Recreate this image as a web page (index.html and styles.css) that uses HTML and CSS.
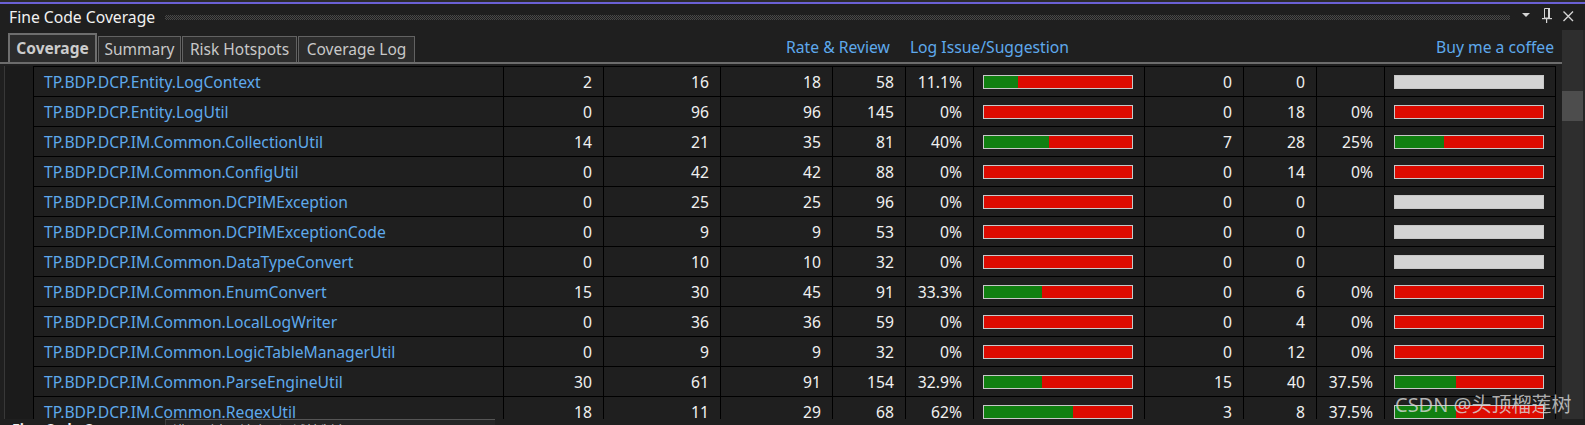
FILE: index.html
```html
<!DOCTYPE html>
<html>
<head>
<meta charset="utf-8">
<title>Fine Code Coverage</title>
<link rel="stylesheet" href="styles.css">
</head>
<body>
<div class="window">
  <div class="topedge"></div>
  <div class="titlebar">
    <span class="title">Fine Code Coverage</span>
    <div class="grip"></div>
    <div class="tbicons">
      <svg class="ic ic-drop" width="16" height="16" viewBox="0 0 16 16"><path d="M4 4h8l-4 4z" fill="#d4d4d4"/></svg>
      <svg class="ic ic-pin" width="16" height="16" viewBox="0 0 16 16"><path d="M5.5 1.5h4.5v9.5h-4.5z" fill="none" stroke="#d4d4d4"/><rect x="9" y="1" width="2" height="11" fill="#d4d4d4"/><rect x="3" y="11" width="10" height="1.2" fill="#d4d4d4"/><rect x="7" y="12" width="1.2" height="4" fill="#d4d4d4"/></svg>
      <svg class="ic ic-close" width="16" height="16" viewBox="0 0 16 16"><path d="M3.5 4.5L13 14M13 4.5L3.5 14" stroke="#d4d4d4" stroke-width="1.4" fill="none"/></svg>
    </div>
  </div>
  <div class="body">
    <div class="main">
      <div class="tabhead">
        <div class="tabs">
          <div class="tab sel">Coverage</div>
          <div class="tab t-sum">Summary</div>
          <div class="tab t-risk">Risk Hotspots</div>
          <div class="tab t-log">Coverage Log</div>
        </div>
        <a class="link l-rate">Rate &amp; Review</a>
        <a class="link l-issue">Log Issue/Suggestion</a>
        <a class="link l-buy">Buy me a coffee</a>
      </div>
      <div class="tabline"></div>
      <div class="gridwrap">
        <div class="gutter"></div>
        <div class="rows">
          <div class="row">
            <div class="c name">TP.BDP.DCP.Entity.LogContext</div>
            <div class="c">2</div><div class="c">16</div><div class="c">18</div><div class="c">58</div><div class="c">11.1%</div>
            <div class="c cb"><div class="bar"><div class="g" style="width:23%"></div></div></div>
            <div class="c">0</div><div class="c">0</div><div class="c"></div>
            <div class="c cb"><div class="bar empty"></div></div>
          </div>
          <div class="row">
            <div class="c name">TP.BDP.DCP.Entity.LogUtil</div>
            <div class="c">0</div><div class="c">96</div><div class="c">96</div><div class="c">145</div><div class="c">0%</div>
            <div class="c cb"><div class="bar"></div></div>
            <div class="c">0</div><div class="c">18</div><div class="c">0%</div>
            <div class="c cb"><div class="bar"></div></div>
          </div>
          <div class="row">
            <div class="c name">TP.BDP.DCP.IM.Common.CollectionUtil</div>
            <div class="c">14</div><div class="c">21</div><div class="c">35</div><div class="c">81</div><div class="c">40%</div>
            <div class="c cb"><div class="bar"><div class="g" style="width:44%"></div></div></div>
            <div class="c">7</div><div class="c">28</div><div class="c">25%</div>
            <div class="c cb"><div class="bar"><div class="g" style="width:33%"></div></div></div>
          </div>
          <div class="row">
            <div class="c name">TP.BDP.DCP.IM.Common.ConfigUtil</div>
            <div class="c">0</div><div class="c">42</div><div class="c">42</div><div class="c">88</div><div class="c">0%</div>
            <div class="c cb"><div class="bar"></div></div>
            <div class="c">0</div><div class="c">14</div><div class="c">0%</div>
            <div class="c cb"><div class="bar"></div></div>
          </div>
          <div class="row">
            <div class="c name">TP.BDP.DCP.IM.Common.DCPIMException</div>
            <div class="c">0</div><div class="c">25</div><div class="c">25</div><div class="c">96</div><div class="c">0%</div>
            <div class="c cb"><div class="bar"></div></div>
            <div class="c">0</div><div class="c">0</div><div class="c"></div>
            <div class="c cb"><div class="bar empty"></div></div>
          </div>
          <div class="row">
            <div class="c name">TP.BDP.DCP.IM.Common.DCPIMExceptionCode</div>
            <div class="c">0</div><div class="c">9</div><div class="c">9</div><div class="c">53</div><div class="c">0%</div>
            <div class="c cb"><div class="bar"></div></div>
            <div class="c">0</div><div class="c">0</div><div class="c"></div>
            <div class="c cb"><div class="bar empty"></div></div>
          </div>
          <div class="row">
            <div class="c name">TP.BDP.DCP.IM.Common.DataTypeConvert</div>
            <div class="c">0</div><div class="c">10</div><div class="c">10</div><div class="c">32</div><div class="c">0%</div>
            <div class="c cb"><div class="bar"></div></div>
            <div class="c">0</div><div class="c">0</div><div class="c"></div>
            <div class="c cb"><div class="bar empty"></div></div>
          </div>
          <div class="row">
            <div class="c name">TP.BDP.DCP.IM.Common.EnumConvert</div>
            <div class="c">15</div><div class="c">30</div><div class="c">45</div><div class="c">91</div><div class="c">33.3%</div>
            <div class="c cb"><div class="bar"><div class="g" style="width:39%"></div></div></div>
            <div class="c">0</div><div class="c">6</div><div class="c">0%</div>
            <div class="c cb"><div class="bar"></div></div>
          </div>
          <div class="row">
            <div class="c name">TP.BDP.DCP.IM.Common.LocalLogWriter</div>
            <div class="c">0</div><div class="c">36</div><div class="c">36</div><div class="c">59</div><div class="c">0%</div>
            <div class="c cb"><div class="bar"></div></div>
            <div class="c">0</div><div class="c">4</div><div class="c">0%</div>
            <div class="c cb"><div class="bar"></div></div>
          </div>
          <div class="row">
            <div class="c name">TP.BDP.DCP.IM.Common.LogicTableManagerUtil</div>
            <div class="c">0</div><div class="c">9</div><div class="c">9</div><div class="c">32</div><div class="c">0%</div>
            <div class="c cb"><div class="bar"></div></div>
            <div class="c">0</div><div class="c">12</div><div class="c">0%</div>
            <div class="c cb"><div class="bar"></div></div>
          </div>
          <div class="row">
            <div class="c name">TP.BDP.DCP.IM.Common.ParseEngineUtil</div>
            <div class="c">30</div><div class="c">61</div><div class="c">91</div><div class="c">154</div><div class="c">32.9%</div>
            <div class="c cb"><div class="bar"><div class="g" style="width:39%"></div></div></div>
            <div class="c">15</div><div class="c">40</div><div class="c">37.5%</div>
            <div class="c cb"><div class="bar"><div class="g" style="width:41%"></div></div></div>
          </div>
          <div class="row">
            <div class="c name">TP.BDP.DCP.IM.Common.RegexUtil</div>
            <div class="c">18</div><div class="c">11</div><div class="c">29</div><div class="c">68</div><div class="c">62%</div>
            <div class="c cb"><div class="bar"><div class="g" style="width:60%"></div></div></div>
            <div class="c">3</div><div class="c">8</div><div class="c">37.5%</div>
            <div class="c cb"><div class="bar"><div class="g" style="width:41%"></div></div></div>
          </div>
        </div>
      </div>
    </div>
    <div class="vscroll"><div class="thumb"></div></div>
    <div class="edge"></div>
  </div>
  <div class="status">
    <span class="st-title">Fine Code Coverage</span>
    <span class="st-box">错误列表 - 输出 - 调试控制台</span>
  </div>
  <div class="watermark">CSDN @头顶榴莲树</div>
</div>
</body>
</html>
```

FILE: styles.css
```css
* { box-sizing: border-box; }
html, body { margin: 0; padding: 0; }
body {
  background: #1f1f1f;
  font-family: "Noto Sans", "Open Sans", sans-serif;
  color: #f0f0f0;
  width: 1585px;
  height: 425px;
  overflow: hidden;
}
.window {
  position: relative;
  width: 1585px;
  height: 425px;
  overflow: hidden;
  background: #1f1f1f;
}
.topedge { height: 2px; background: #2b2b2b; }
.titlebar {
  height: 28px;
  border-top: 2px solid #6a60d4;
  display: flex;
  align-items: center;
  padding-left: 9px;
}
.title { font-size: 15.7px; color: #f1f1f1; line-height: 24px; }
.grip {
  flex: 1;
  height: 5px;
  margin: 0 8px 0 10px;
  background: repeating-conic-gradient(#4a4a4a 0 25%, transparent 0 50%) 0 0 / 2px 2px;
}
.tbicons {
  display: flex;
  align-items: flex-start;
  gap: 5px;
  height: 26px;
  padding-right: 9px;
}
.ic { display: block; }
.ic-drop { margin-top: 5px; }
.ic-pin { margin-top: 3px; }
.ic-close { margin-top: 3px; }

.body { display: flex; height: 389px; }
.main { width: 1562px; display: flex; flex-direction: column; }
.vscroll { width: 21px; background: #2e2e2e; padding-top: 61px; }
.thumb { height: 30px; background: #4d4d4d; }
.edge { width: 2px; background: #262626; }

.tabhead {
  height: 32px;
  display: flex;
  align-items: flex-end;
  padding-left: 8px;
  padding-right: 8px;
}
.tabs { display: flex; align-items: flex-end; gap: 1px; }
.tab {
  height: 26px;
  border: 1px solid #626262;
  border-bottom: none;
  background: #2c2c2c;
  color: #c8c8c8;
  font-size: 15.5px;
  line-height: 24px;
  text-align: center;
  white-space: nowrap;
}
.tab.sel {
  width: 89px;
  height: 29px;
  border: 2px solid #6e6e6e;
  border-bottom: none;
  font-weight: bold;
  line-height: 27px;
  color: #cccccc;
}
.t-sum { width: 83px; }
.t-risk { width: 115px; }
.t-log { width: 117px; }
.link {
  align-self: center;
  font-size: 15.7px;
  color: #5ea9ec;
  padding-top: 2px;
  white-space: nowrap;
}
.l-rate { margin-left: 371px; }
.l-issue { margin-left: 20px; }
.l-buy { margin-left: auto; }
.tabline { height: 2px; background: #6c6c6c; }

.gridwrap {
  margin-top: 2px;
  flex: 1;
  display: flex;
  overflow: hidden;
}
.gutter {
  width: 34px;
  border-right: 1px solid #000;
  background: linear-gradient(to right, #1f1f1f 0 4px, #383838 4px 5px, #1b1b1b 5px);
}
.rows { display: flex; flex-direction: column; }
.row {
  display: grid;
  grid-template-columns: 470px 100px 117px 112px 73px 68px 171px 99px 73px 68px 171px;
  height: 30px;
  flex: none;
  border-top: 1px solid #000;
  background: #1f1f1f;
}
.c {
  border-right: 1px solid #000;
  display: flex;
  align-items: center;
  justify-content: flex-end;
  padding-right: 11px;
  font-size: 15.7px;
  color: #f0f0f0;
  white-space: nowrap;
}
.c.name {
  justify-content: flex-start;
  padding-left: 10px;
  color: #5ea9ec;
}
.c.cb {
  justify-content: flex-start;
  padding-left: 9px;
  padding-right: 0;
}
.bar {
  width: 150px;
  height: 14px;
  border: 1px solid #c8c8c8;
  background: #dd0b00;
  display: flex;
}
.bar .g { height: 100%; background: #118011; }
.bar.empty { background: #d4d4d4; }

.status {
  height: 6px;
  overflow: hidden;
  background: #1f1f1f;
  display: flex;
  align-items: flex-start;
  padding-left: 12px;
}
.st-title {
  font-size: 14px;
  font-weight: bold;
  color: #f0f0f0;
  line-height: 20px;
  margin-top: 0;
  width: 153px;
  white-space: nowrap;
}
.st-box {
  font-family: "Noto Sans CJK SC", sans-serif;
  font-size: 14px;
  color: #c8c8c8;
  line-height: 20px;
  margin-top: 0;
  padding-left: 6px;
  width: 330px;
  border-top: 1px solid #555;
  border-left: 1px solid #3f3f3f;
  background: #252526;
  white-space: nowrap;
}
.watermark {
  position: absolute;
  left: 1395px;
  top: 392px;
  font-family: "Noto Sans", "Noto Sans CJK SC", sans-serif;
  font-size: 20px;
  line-height: 26px;
  color: rgba(220, 220, 220, 0.78);
  white-space: nowrap;
}
```
